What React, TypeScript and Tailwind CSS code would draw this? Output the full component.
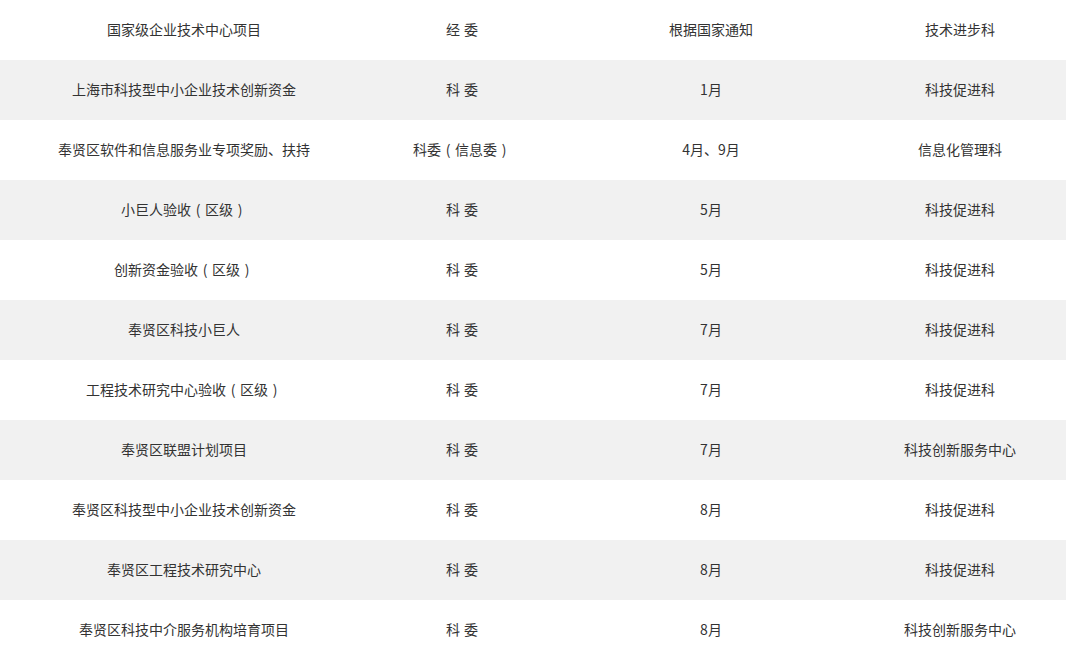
const rows: [string, string, string, string][] = [
  ["国家级企业技术中心项目", "经 委", "根据国家通知", "技术进步科"],
  ["上海市科技型中小企业技术创新资金", "科 委", "1月", "科技促进科"],
  ["奉贤区软件和信息服务业专项奖励、扶持", "科委（信息委）", "4月、9月", "信息化管理科"],
  ["小巨人验收（区级）", "科 委", "5月", "科技促进科"],
  ["创新资金验收（区级）", "科 委", "5月", "科技促进科"],
  ["奉贤区科技小巨人", "科 委", "7月", "科技促进科"],
  ["工程技术研究中心验收（区级）", "科 委", "7月", "科技促进科"],
  ["奉贤区联盟计划项目", "科 委", "7月", "科技创新服务中心"],
  ["奉贤区科技型中小企业技术创新资金", "科 委", "8月", "科技促进科"],
  ["奉贤区工程技术研究中心", "科 委", "8月", "科技促进科"],
  ["奉贤区科技中介服务机构培育项目", "科 委", "8月", "科技创新服务中心"],
];

// the source font centres fullwidth parens in a full em box
function Cell({ text }: { text: string }) {
  const parts = text.split(/([（） ])/);
  return (
    <div className="text-center whitespace-nowrap">
      {parts.map((p, i) => {
        if (p === "（" || p === "）")
          return (
            <span key={i} className="inline-block w-[14px] text-center">
              {p === "（" ? "(" : ")"}
            </span>
          );
        if (p === " ") return <span key={i} className="inline-block w-[4px]" />;
        return <span key={i}>{p}</span>;
      })}
    </div>
  );
}

export default function App() {
  return (
    <div className="w-[1066px] h-[656px] overflow-hidden bg-white text-[14px] text-[#333333] font-['Microsoft_YaHei','Noto_Sans_CJK_SC',sans-serif]">
      {rows.map((r, i) => (
        <div
          key={i}
          className={`grid grid-cols-[368px_188px_310px_188px_1fr] h-[60px] pb-[2px] items-center ${
            i % 2 === 1 ? "bg-[#f1f1f1]" : "bg-white"
          }`}
        >
          <Cell text={r[0]} />
          <Cell text={r[1]} />
          <Cell text={r[2]} />
          <Cell text={r[3]} />
          <div />
        </div>
      ))}
    </div>
  );
}
